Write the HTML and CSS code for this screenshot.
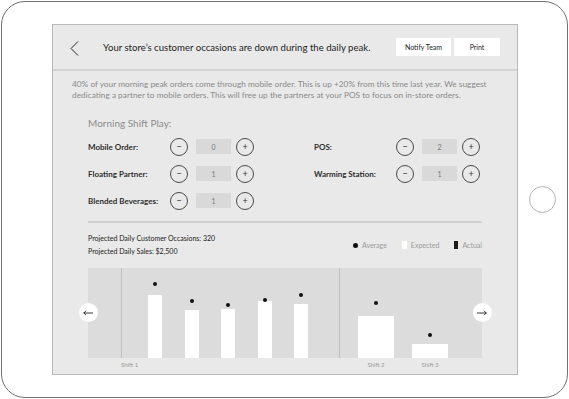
FILE: index.html
```html
<!DOCTYPE html>
<html lang="en">

<head>
    <meta charset="UTF-8">
    <meta name="viewport" content="width=device-width, initial-scale=1.0">
    <title>Daily Peak</title>
    <link rel="stylesheet" href="styles.css">
</head>

<body>
    <div class="ipad">
        <div class="screen">
            <header class="topbar">
                <svg class="back" viewBox="0 0 9 15"><polyline points="8,0.5 1,7.5 8,14.5" fill="none" stroke="#222" stroke-width="1"/></svg>
                <h1 class="title">Your store’s customer occasions are down during the daily peak.</h1>
                <div class="actions">
                    <button class="btn">Notify Team</button>
                    <button class="btn btn-print">Print</button>
                </div>
            </header>

            <main class="content">
                <p class="summary">40% of your morning peak orders come through mobile order. This is up +20% from this time last year. We suggest dedicating a partner to mobile orders. This will free up the partners at your POS to focus on in-store orders.</p>

                <section class="play">
                    <h2 class="play-title">Morning Shift Play:</h2>
                    <div class="play-grid">
                        <div class="row">
                            <span class="label">Mobile Order:</span>
                            <div class="stepper"><button class="step">−</button><span class="value">0</span><button class="step">+</button></div>
                        </div>
                        <div class="row">
                            <span class="label">POS:</span>
                            <div class="stepper"><button class="step">−</button><span class="value">2</span><button class="step">+</button></div>
                        </div>
                        <div class="row">
                            <span class="label">Floating Partner:</span>
                            <div class="stepper"><button class="step">−</button><span class="value">1</span><button class="step">+</button></div>
                        </div>
                        <div class="row">
                            <span class="label">Warming Station:</span>
                            <div class="stepper"><button class="step">−</button><span class="value">1</span><button class="step">+</button></div>
                        </div>
                        <div class="row">
                            <span class="label">Blended Beverages:</span>
                            <div class="stepper"><button class="step">−</button><span class="value">1</span><button class="step">+</button></div>
                        </div>
                    </div>
                </section>

                <section class="forecast">
                    <div class="stats-row">
                        <div class="stats">
                            <div>Projected Daily Customer Occasions: 320</div>
                            <div>Projected Daily Sales: $2,500</div>
                        </div>
                        <div class="legend">
                            <span class="key"><i class="swatch swatch-dot"></i>Average</span>
                            <span class="key"><i class="swatch swatch-expected"></i>Expected</span>
                            <span class="key"><i class="swatch swatch-actual"></i>Actual</span>
                        </div>
                    </div>

                    <div class="chart">
                        <div class="plot">
                            <div class="lead"></div>
                            <div class="shift shift-one">
                                <div class="col"><i class="dot" style="bottom: 72px"></i><div class="bar" style="height: 63px"></div></div>
                                <div class="col"><i class="dot" style="bottom: 55px"></i><div class="bar" style="height: 48px"></div></div>
                                <div class="col"><i class="dot" style="bottom: 51px"></i><div class="bar" style="height: 49px"></div></div>
                                <div class="col"><i class="dot" style="bottom: 56px"></i><div class="bar" style="height: 57px"></div></div>
                                <div class="col"><i class="dot" style="bottom: 61px"></i><div class="bar" style="height: 54px"></div></div>
                            </div>
                            <div class="shift shift-two">
                                <div class="col col-wide"><i class="dot" style="bottom: 53px"></i><div class="bar" style="height: 42px"></div></div>
                                <div class="col col-wide"><i class="dot" style="bottom: 21px"></i><div class="bar" style="height: 14px"></div></div>
                            </div>
                        </div>
                        <div class="axis">
                            <div class="lead"></div>
                            <div class="axis-one">Shift 1</div>
                            <div class="axis-two"><span>Shift 2</span><span>Shift 3</span></div>
                        </div>
                        <button class="arrow arrow-prev"><svg viewBox="0 0 10 6"><path d="M0.5 3H10M3 0.8L0.8 3L3 5.2" fill="none" stroke="#222" stroke-width="0.9"/></svg></button>
                        <button class="arrow arrow-next"><svg viewBox="0 0 10 6"><path d="M0 3H9.5M7 0.8L9.2 3L7 5.2" fill="none" stroke="#222" stroke-width="0.9"/></svg></button>
                    </div>
                </section>
            </main>
        </div>
        <div class="home-area"><span class="home"></span></div>
    </div>
</body>

</html>
```

FILE: styles.css
```css
html,
body {
    margin: 0;
    padding: 0;
    background: #fff;
    font-family: Lato, "Open Sans", sans-serif;
}

.ipad {
    box-sizing: border-box;
    width: 567px;
    height: 397px;
    margin: 1px;
    padding: 22px 0 22px 50px;
    border: 1px solid #707070;
    border-radius: 24px;
    display: flex;
}

.screen {
    box-sizing: border-box;
    width: 466px;
    height: 351px;
    border: 1px solid #b9b9b9;
    background: #e9e9e9;
    overflow: hidden;
}

.home-area {
    flex: 1;
    display: flex;
    align-items: center;
    justify-content: center;
}

.home {
    width: 25px;
    height: 25px;
    border: 1px solid #b4b4b4;
    border-radius: 50%;
}

/* header */
.topbar {
    height: 44px;
    padding: 0 17px;
    border-bottom: 2px solid #d3d3d3;
    display: flex;
    align-items: center;
}

.back {
    width: 9px;
    height: 15px;
    margin-top: 2px;
}

.title {
    flex: 1;
    margin: 0 0 0 24px;
    font-size: 9.6px;
    font-weight: 400;
    white-space: nowrap;
    color: #1e1e1e;
}

.actions {
    display: flex;
    gap: 3px;
}

.btn {
    width: 55px;
    height: 18px;
    padding: 0;
    border: none;
    background: #fff;
    font-family: inherit;
    font-size: 7px;
    color: #222;
}

.btn-print {
    width: 46px;
}

/* body */
.content {
    padding-top: 8px;
}

.summary {
    margin: 0 19px;
    font-size: 8.3px;
    line-height: 10.5px;
    color: #8a8a8a;
}

.play {
    padding: 0 35px;
}

.play-title {
    margin: 17px 0 0;
    font-size: 10px;
    line-height: 12px;
    font-weight: 400;
    color: #8c8c8c;
}

.play-grid {
    display: grid;
    grid-template-columns: 166px 166px;
    column-gap: 60px;
    row-gap: 8px;
    margin-top: 8px;
}

.row {
    height: 19px;
    display: flex;
    align-items: center;
    justify-content: space-between;
}

.label {
    font-size: 8px;
    font-weight: 700;
    color: #2e2e2e;
}

.stepper {
    display: flex;
    align-items: center;
}

.step {
    box-sizing: border-box;
    width: 18px;
    height: 18px;
    padding: 0;
    border: 1px solid #4a4a4a;
    border-radius: 50%;
    background: transparent;
    font-family: inherit;
    font-size: 9px;
    line-height: 1;
    color: #333;
}

.value {
    width: 35px;
    height: 15px;
    margin: 0 5px 0 8px;
    background: #d9d9d9;
    display: flex;
    align-items: center;
    justify-content: center;
    font-size: 7px;
    color: #777;
}

.forecast {
    margin: 11px 35px 0;
    border-top: 2px solid #cfcfcf;
}

.stats-row {
    margin-top: 9px;
    display: flex;
    align-items: center;
    justify-content: space-between;
}

.stats {
    font-size: 7px;
    line-height: 13px;
    color: #222;
}

.legend {
    display: flex;
    align-items: center;
    gap: 15px;
    font-size: 7px;
    color: #9a9a9a;
}

.key {
    display: flex;
    align-items: center;
}

.swatch {
    display: inline-block;
    margin-right: 4px;
}

.swatch-dot {
    width: 5px;
    height: 5px;
    border-radius: 50%;
    background: #111;
}

.swatch-expected {
    width: 5px;
    height: 8px;
    background: #fff;
}

.swatch-actual {
    width: 4px;
    height: 8px;
    background: #1a1a1a;
}

/* chart */
.chart {
    position: relative;
    margin-top: 10px;
}

.plot {
    height: 90px;
    display: flex;
    background: #dcdcdc;
}

.lead {
    width: 33px;
}

.shift {
    border-left: 1px solid #bfbfbf;
    display: flex;
    align-items: flex-end;
}

.shift-one {
    box-sizing: border-box;
    width: 218px;
    padding-left: 26px;
    gap: 22.5px;
}

.shift-two {
    flex: 1;
    padding-left: 18px;
    gap: 18px;
}

.col {
    position: relative;
    width: 14px;
    height: 100%;
    display: flex;
    align-items: flex-end;
}

.col-wide {
    width: 36px;
}

.bar {
    width: 100%;
    background: #fff;
}

.dot {
    position: absolute;
    left: 50%;
    width: 4px;
    height: 4px;
    margin-left: -2px;
    border-radius: 50%;
    background: #111;
}

.axis {
    display: flex;
    padding-top: 2px;
    font-size: 6px;
    line-height: 10px;
    color: #9a9a9a;
}

.axis-one {
    width: 218px;
}

.axis-two {
    display: flex;
    padding-left: 19px;
    gap: 18px;
}

.axis-two span {
    width: 36px;
    text-align: center;
}

.arrow {
    position: absolute;
    top: 35px;
    width: 19px;
    height: 19px;
    padding: 0;
    border: none;
    border-radius: 50%;
    background: #fff;
    display: flex;
    align-items: center;
    justify-content: center;
}

.arrow svg {
    width: 10px;
    height: 6px;
}

.arrow-prev {
    left: -9.5px;
}

.arrow-next {
    right: -9.5px;
}
```
